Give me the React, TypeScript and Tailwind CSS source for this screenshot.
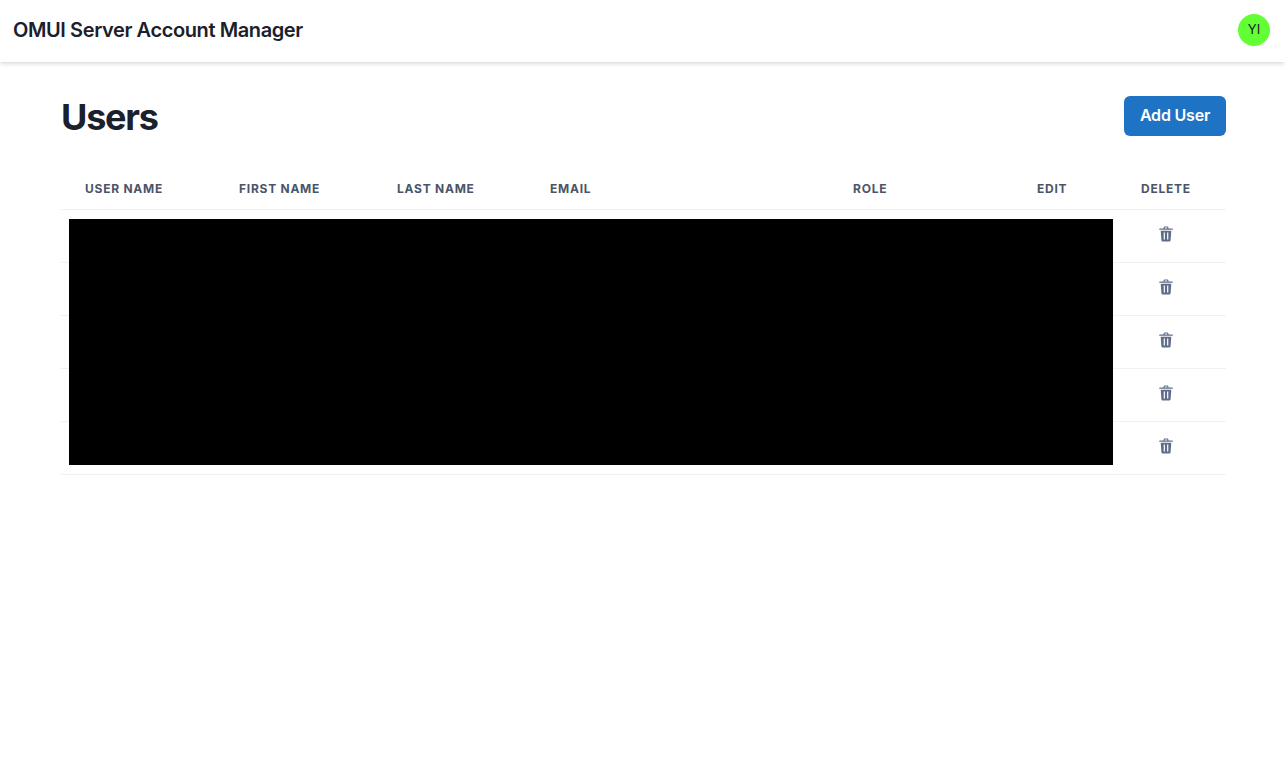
const headers = [
    { label: "User Name", width: "w-[154px]" },
    { label: "First Name", width: "w-[158px]" },
    { label: "Last Name", width: "w-[153px]" },
    { label: "Email", width: "w-[303px]" },
    { label: "Role", width: "w-[184px]" },
    { label: "Edit", width: "w-[104px]" },
    { label: "Delete", width: "w-[109px]" },
];

const rows = [1, 2, 3, 4, 5];

function TrashIcon() {
    return (
        <svg width="14" height="16" viewBox="0 0 14 16" className="block text-[#5f6d8a]">
            <path
                fillRule="evenodd"
                fill="currentColor"
                d="M4.6 1.6C4.7 0.9 5.2 0.5 5.9 0.5H8.1C8.8 0.5 9.3 0.9 9.4 1.6L9.6 2.6H13.2C13.6 2.6 13.9 2.9 13.9 3.2C13.9 3.6 13.6 3.8 13.2 3.8H0.8C0.4 3.8 0.1 3.6 0.1 3.2C0.1 2.9 0.4 2.6 0.8 2.6H4.4ZM5.7 2.6H8.3L8.2 1.8C8.2 1.7 8.1 1.6 8 1.6H6C5.9 1.6 5.8 1.7 5.8 1.8ZM1.7 4.8H12.3L11.6 14.2C11.5 15 10.9 15.6 10.1 15.6H3.9C3.1 15.6 2.5 15 2.4 14.2ZM4.7 6.6V13.4H5.9V6.6ZM8.1 6.6V13.4H9.3V6.6Z"
            />
        </svg>
    );
}

export default function App() {
    return (
        <div className="min-h-[775px] bg-white font-['Inter',sans-serif] text-[#1a202c]">
            <header className="flex h-[62px] items-center justify-between bg-white pb-[2px] pl-[13px] pr-[15px] shadow-[0_1px_5px_rgba(0,0,0,0.2)]">
                <h1 className="text-xl font-semibold tracking-[-0.4px]">OMUI Server Account Manager</h1>
                <div className="flex h-8 w-8 items-center justify-center rounded-full bg-[#62ff35] text-[13px]">
                    YI
                </div>
            </header>

            <main className="pl-[61px] pr-[59px]">
                <div className="flex items-start justify-between pt-[34px]">
                    <h2 className="text-4xl font-bold leading-[42px] tracking-[-1.2px]">Users</h2>
                    <button className="h-10 w-[102px] rounded-md bg-[#1f73c4] pb-[2px] font-semibold tracking-[-0.2px] text-white">
                        Add User
                    </button>
                </div>

                <div className="relative mt-[29px]">
                    <table className="w-full table-fixed border-collapse">
                        <thead>
                            <tr className="h-[42px] border-b border-[#edf2f7]">
                                {headers.map((h) => (
                                    <th
                                        key={h.label}
                                        className={`${h.width} px-6 pt-[2px] text-left text-xs font-bold uppercase tracking-[0.75px] text-[#4a5568]`}
                                    >
                                        {h.label}
                                    </th>
                                ))}
                            </tr>
                        </thead>
                        <tbody>
                            {rows.map((r) => (
                                <tr key={r} className="h-[53px] border-b border-[#edf2f7]">
                                    <td colSpan={6}></td>
                                    <td className="pb-[4px] pl-[42px]">
                                        <TrashIcon />
                                    </td>
                                </tr>
                            ))}
                        </tbody>
                    </table>
                    <div className="absolute left-2 top-[52px] h-[246px] w-[1044px] bg-black"></div>
                </div>
            </main>
        </div>
    );
}
